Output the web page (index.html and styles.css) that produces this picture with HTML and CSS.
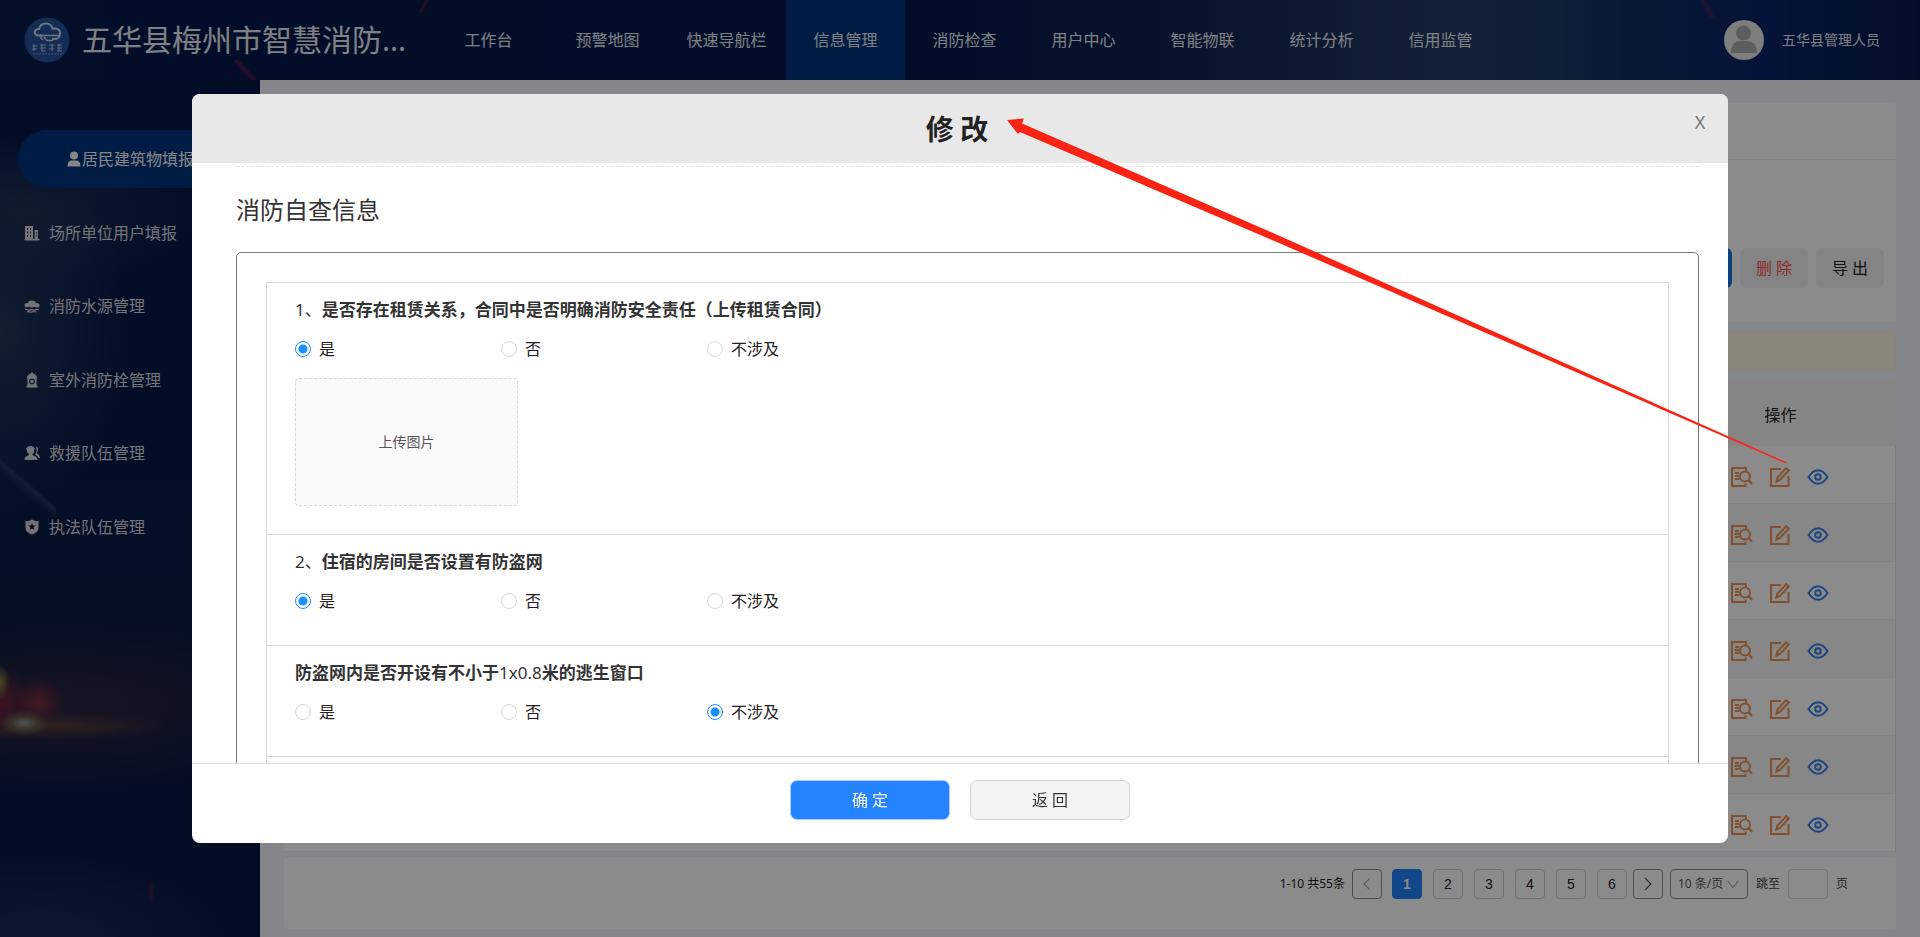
FILE: index.html
```
<!DOCTYPE html>
<html lang="zh-CN">
<head>
<meta charset="utf-8">
<title>五华县梅州市智慧消防</title>
<link rel="stylesheet" href="styles.css">
</head>
<body>
<svg class="sprite" aria-hidden="true">
  <symbol id="i-check" viewBox="0 0 22 20"><path d="M15 4.500V1H1v18h13.500v-2.500M4 6h3M4 9h4M4 12h4.500M4 6h4"/><circle cx="14" cy="9.500" r="5"/><path d="M17.500 13l3.500 4"/></symbol>
  <symbol id="i-edit" viewBox="0 0 20 20"><path d="M11 2H1v17h17.500V9"/><path d="M6.500 14.500l.8-3.800L16 1.200l2.800 2.300L10 13z"/></symbol>
  <symbol id="i-eye" viewBox="0 0 22 16"><path d="M1.500 8C4.500 3.500 7.500 1.200 11 1.200S17.500 3.500 20.500 8c-3 4.500-6 6.800-9.500 6.800S4.500 12.500 1.500 8z"/><circle cx="11" cy="8" r="2.800"/></symbol>
</svg>

<div class="app">
  <header class="topbar">
    <div class="brand">
      <svg class="logo" viewBox="0 0 46 46" aria-hidden="true">
        <circle cx="23" cy="23" r="22.500" fill="#24539b"/>
        <path d="M19 18.500h-5c-5-1-4-6.500 1-6.500 1-4 4-5.500 7-5.500s6 2 6.500 5c5-.5 7.500 1.500 7.500 4.500s-1.500 6-5 6h-3" fill="none" stroke="#c9d6ea" stroke-width="2"/>
        <path d="M16 18.500h19M16 20l3 3M20 20l3 3.500h5l2-2" fill="none" stroke="#c9d6ea" stroke-width="1.500"/>
        <path d="M8 29h5M8 32h5M10 27v7M16 28h6M16 31h6M17 34h5M18 27v7M25 28h5M25 32h5M28 27v7M33 28h5M33 31h5M33 34h5M35 27v7" stroke="#a9bddd" stroke-width="1.200"/>
        <path d="M9 37h29" stroke="#86a3cf" stroke-width="1" stroke-dasharray="2 1"/>
      </svg>
      <h1>五华县梅州市智慧消防...</h1>
    </div>
    <nav class="nav">
      <a href="#">工作台</a>
      <a href="#">预警地图</a>
      <a href="#">快速导航栏</a>
      <a href="#" class="active">信息管理</a>
      <a href="#">消防检查</a>
      <a href="#">用户中心</a>
      <a href="#">智能物联</a>
      <a href="#">统计分析</a>
      <a href="#">信用监管</a>
    </nav>
    <div class="user">
      <svg class="avatar" viewBox="0 0 40 40" aria-hidden="true"><circle cx="20" cy="20" r="20" fill="#e6e6e6"/><circle cx="19.500" cy="13" r="7.500" fill="#a9a9a9"/><path d="M7 30q2-9 9-9h7q8 0 10 9v3H7z" fill="#a9a9a9"/></svg>
      <span>五华县管理人员</span>
    </div>
  </header>

  <div class="body">
    <aside class="sidebar">
      <nav class="menu">
        <a href="#" class="current">
          <svg viewBox="0 0 14 16" aria-hidden="true"><circle cx="7" cy="4.500" r="4"/><path d="M.5 15.500c0-4.500 2-6 4.500-6h4c2.500 0 4.500 1.500 4.500 6z"/></svg>居民建筑物填报</a>
        <a href="#">
          <svg viewBox="0 0 16 16" aria-hidden="true"><path fill-rule="evenodd" d="M1 1h8v13h1.500V5H14v9h1.500v1.500H.5V14H1zM3 3v2h1V3zM6 3v2h1V3zM3 6.500v2h1v-2zM6 6.500v2h1v-2zM3 10v2h1v-2zM6 10v2h1v-2zM11.800 7v1.500h1V7zM11.800 10v1.500h1V10z"/></svg>场所单位用户填报</a>
        <a href="#">
          <svg viewBox="0 0 16 16" aria-hidden="true"><path d="M1 9C-.3 6 1.500 4.500 4 5c1-3.200 6.500-3.200 8 0 3-.5 4.300 1.500 3 4-2 1.200-3 0-4.500 0S8.500 10 7 9.500 5 8.500 3.800 9 2 9.700 1 9z"/><path d="M1 11.500c2-1.200 3 1.500 5 .4s3 .8 5 0 2.500-.8 4-.2M3 14c2-1 3.500.6 5 0s2.500-.4 4.500 0" fill="none" stroke="currentColor" stroke-width="1.200"/></svg>消防水源管理</a>
        <a href="#">
          <svg viewBox="0 0 16 16" aria-hidden="true"><path fill-rule="evenodd" d="M7 .5h2v1c2 .4 3.500 1.600 3.700 3.500H13v1.500h-.5v7h1V15.500h-11v-2h1v-7H3V5h.3C3.500 3.100 5 1.900 7 1.500zM8 6.500a3 3 0 100 6 3 3 0 000-6zm0 1.200a1.800 1.800 0 110 3.600 1.800 1.800 0 010-3.600z"/><circle cx="8" cy="9.500" r=".9"/></svg>室外消防栓管理</a>
        <a href="#">
          <svg viewBox="0 0 16 16" aria-hidden="true"><path d="M2 4c1-4 8-4 9 0l-.8.5c.5 2-.4 3.500-1.700 4.500v1l3 1.500c1.500.8 2 2 2 3.500H.5c0-2 .5-3 2-3.700L5 10V9C3.500 8 2.800 6.500 3 4.500z"/><path d="M11.500 1.500c2.500.3 3 2.500 2.300 4.500-.4 1-1 1.500-1 2.200l1.700 1.300c1 .8 1.500 2 1.500 3.500h-1.500c-.3-1.500-1.500-2.300-3.300-3.200 0-1 1-2.300 1.300-3.800s0-3-1-4.500z"/></svg>救援队伍管理</a>
        <a href="#">
          <svg viewBox="0 0 16 16" aria-hidden="true"><path fill-rule="evenodd" d="M1.500 2L4 2.300 8 .5l4 1.800 2.500-.3v7c0 3-2.500 5-6.500 6.500C4 14 1.500 12 1.500 9zM8 4L7 6.500l-2.700.1 2.100 1.700-.7 2.600L8 9.400l2.300 1.500-.7-2.600 2.100-1.700L9 6.500z"/></svg>执法队伍管理</a>
      </nav>
    </aside>

    <main class="content">
      <section class="panel filters">
        <div class="panel-head"></div>
        <div class="actions">
          <button type="button" class="btn-add" aria-label="新增"></button>
          <button type="button" class="btn-del">删 除</button>
          <button type="button" class="btn-exp">导 出</button>
        </div>
      </section>
      <div class="notice"></div>
      <table class="list">
        <thead><tr><th></th><th class="ops">操作</th></tr></thead>
        <tbody>
          <tr><td></td><td><div class="row-ops"><button type="button" aria-label="检查"><svg class="or"><use href="#i-check"/></svg></button><button type="button" aria-label="修改"><svg class="or sm"><use href="#i-edit"/></svg></button><button type="button" aria-label="查看"><svg class="bl"><use href="#i-eye"/></svg></button></div></td></tr>
          <tr><td></td><td><div class="row-ops"><button type="button" aria-label="检查"><svg class="or"><use href="#i-check"/></svg></button><button type="button" aria-label="修改"><svg class="or sm"><use href="#i-edit"/></svg></button><button type="button" aria-label="查看"><svg class="bl"><use href="#i-eye"/></svg></button></div></td></tr>
          <tr><td></td><td><div class="row-ops"><button type="button" aria-label="检查"><svg class="or"><use href="#i-check"/></svg></button><button type="button" aria-label="修改"><svg class="or sm"><use href="#i-edit"/></svg></button><button type="button" aria-label="查看"><svg class="bl"><use href="#i-eye"/></svg></button></div></td></tr>
          <tr><td></td><td><div class="row-ops"><button type="button" aria-label="检查"><svg class="or"><use href="#i-check"/></svg></button><button type="button" aria-label="修改"><svg class="or sm"><use href="#i-edit"/></svg></button><button type="button" aria-label="查看"><svg class="bl"><use href="#i-eye"/></svg></button></div></td></tr>
          <tr><td></td><td><div class="row-ops"><button type="button" aria-label="检查"><svg class="or"><use href="#i-check"/></svg></button><button type="button" aria-label="修改"><svg class="or sm"><use href="#i-edit"/></svg></button><button type="button" aria-label="查看"><svg class="bl"><use href="#i-eye"/></svg></button></div></td></tr>
          <tr><td></td><td><div class="row-ops"><button type="button" aria-label="检查"><svg class="or"><use href="#i-check"/></svg></button><button type="button" aria-label="修改"><svg class="or sm"><use href="#i-edit"/></svg></button><button type="button" aria-label="查看"><svg class="bl"><use href="#i-eye"/></svg></button></div></td></tr>
          <tr><td></td><td><div class="row-ops"><button type="button" aria-label="检查"><svg class="or"><use href="#i-check"/></svg></button><button type="button" aria-label="修改"><svg class="or sm"><use href="#i-edit"/></svg></button><button type="button" aria-label="查看"><svg class="bl"><use href="#i-eye"/></svg></button></div></td></tr>
        </tbody>
      </table>
      <section class="panel pager">
        <span class="total">1-10 共55条</span>
        <button type="button" class="step off" aria-label="上一页"><svg viewBox="0 0 12 12"><path d="M8.500 1L3.500 6l5 5"/></svg></button>
        <div class="pages">
          <button type="button" class="on">1</button>
          <button type="button">2</button>
          <button type="button">3</button>
          <button type="button">4</button>
          <button type="button">5</button>
          <button type="button">6</button>
        </div>
        <button type="button" class="step" aria-label="下一页"><svg viewBox="0 0 12 12"><path d="M3.500 1l5 5-5 5"/></svg></button>
        <span class="size"><select aria-label="每页条数"><option>10 条/页</option></select><svg viewBox="0 0 12 12" aria-hidden="true"><path d="M1.500 3.500L6 9l4.500-5.500"/></svg></span>
        <label class="jump">跳至<input type="text">页</label>
      </section>
    </main>
  </div>
</div>

<div class="mask">
  <section class="modal" role="dialog" aria-labelledby="dlg-title">
    <header class="modal-head">
      <h2 id="dlg-title">修 改</h2>
      <button type="button" class="close">X</button>
    </header>
    <div class="modal-body">
      <h3>消防自查信息</h3>
      <div class="sheet">
        <form class="questions">
          <fieldset class="q">
            <legend><span>1、</span>是否存在租赁关系，合同中是否明确消防安全责任（上传租赁合同）</legend>
            <div class="opts">
              <label><input type="radio" name="q1" checked>是</label>
              <label><input type="radio" name="q1">否</label>
              <label><input type="radio" name="q1">不涉及</label>
            </div>
            <button type="button" class="upload">上传图片</button>
          </fieldset>
          <fieldset class="q">
            <legend><span>2、</span>住宿的房间是否设置有防盗网</legend>
            <div class="opts">
              <label><input type="radio" name="q2" checked>是</label>
              <label><input type="radio" name="q2">否</label>
              <label><input type="radio" name="q2">不涉及</label>
            </div>
          </fieldset>
          <fieldset class="q">
            <legend>防盗网内是否开设有不小于<span>1x0.8</span>米的逃生窗口</legend>
            <div class="opts">
              <label><input type="radio" name="q3">是</label>
              <label><input type="radio" name="q3">否</label>
              <label><input type="radio" name="q3" checked>不涉及</label>
            </div>
          </fieldset>
          <div class="q"></div>
        </form>
      </div>
    </div>
    <footer class="modal-foot">
      <button type="button" class="ok">确 定</button>
      <button type="button" class="back">返 回</button>
    </footer>
  </section>
</div>

<svg class="arrow" viewBox="0 0 1920 937" preserveAspectRatio="none" aria-hidden="true">
  <path d="M1007 120L1024 118.500 1022 123.500 1281 236.500 1787 462.500 1786 463.500 1279 243 1020 132 1018 134z"/>
</svg>
</body>
</html>
```
FILE: styles.css
```
* { box-sizing: border-box; }
body {
  margin: 0;
  overflow: hidden;
  font-family: "Noto Sans", "Noto Sans CJK SC", sans-serif;
  font-size: 16px;
  line-height: 24px;
  color: #222;
}
a { color: inherit; text-decoration: none; }
button, input, select { font: inherit; color: inherit; margin: 0; padding: 0; }
button { cursor: pointer; }
h1, h2, h3 { margin: 0; font-weight: 400; }
.sprite { display: none; }

/* page shell */
.app { display: flex; flex-direction: column; min-height: 100vh; }
.topbar {
  display: flex;
  align-items: center;
  height: 80px;
  color: #e8eaee;
  background:
    linear-gradient(118deg, transparent 38%, rgba(150, 25, 75, .5) 50%, transparent 62%) 417px -4px / 16px 16px no-repeat,
    linear-gradient(48deg, transparent 36%, rgba(150, 20, 70, .55) 50%, transparent 64%) 234px 60px / 22px 20px no-repeat,
    linear-gradient(62deg, transparent 36%, rgba(130, 20, 90, .5) 50%, transparent 64%) 1698px 0 / 20px 18px no-repeat,
    linear-gradient(90deg, #061a4c 0, #04184a 22%, #05194c 50%, #0c2250 60%, #182f5a 68%, #213a66 75%, #1d3765 81%, #0d2962 86%, #092466 92%, #051a4c 100%);
}
.brand { display: flex; align-items: center; gap: 12px; width: 429px; padding-left: 24px; }
.brand h1 { font-size: 30px; line-height: 40px; }
.logo { flex: none; width: 46px; height: 46px; }
.nav { display: flex; align-self: stretch; }
.nav a { width: 119px; line-height: 80px; text-align: center; }
.nav .active { background: #00337c; }
.user { display: flex; align-items: center; gap: 18px; margin-left: auto; padding-right: 40px; font-size: 14px; }
.avatar { width: 40px; height: 40px; }

.body { display: flex; flex: 1; }
.sidebar {
  flex: none;
  width: 260px;
  padding-top: 50px;
  color: #fff;
  background:
    radial-gradient(ellipse 24px 13px at 24px 643px, #8f9f9c, rgba(130, 130, 90, .5) 50%, transparent),
    radial-gradient(ellipse 10px 18px at 0 602px, #85863a, transparent),
    radial-gradient(ellipse 26px 24px at 38px 622px, rgba(130, 50, 62, .9), rgba(110, 40, 60, .5) 60%, transparent),
    radial-gradient(ellipse 28px 36px at 4px 624px, rgba(120, 35, 60, .9), transparent),
    radial-gradient(ellipse 120px 14px at 50px 646px, rgba(120, 75, 50, .6), transparent),
    radial-gradient(ellipse 260px 90px at 60px 630px, rgba(70, 50, 62, .5), transparent),
    radial-gradient(ellipse 4px 14px at 151px 812px, rgba(120, 30, 50, .6), transparent),
    linear-gradient(41deg, transparent 44%, rgba(50, 72, 110, .6) 49%, transparent 51%) -50px 320px / 106px 124px no-repeat,
    radial-gradient(ellipse 130px 190px at 0 250px, rgba(48, 66, 95, .7), transparent),
    radial-gradient(ellipse 180px 80px at 30px 130px, rgba(46, 58, 86, .6), transparent),
    radial-gradient(ellipse 200px 100px at 40px 870px, rgba(42, 64, 104, .6), transparent),
    linear-gradient(180deg, #041748 0, #071a46 45%, #0b1a42 60%, #0f1b40 72%, #081842 80%, #061844 100%);
}
.menu { display: flex; flex-direction: column; justify-content: space-between; height: 426px; }
.menu a { display: flex; align-items: center; gap: 9px; height: 58px; padding-left: 24px; color: #d2d5db; }
.menu svg { flex: none; width: 16px; height: 16px; fill: currentColor; }
.menu .current {
  gap: 0;
  margin-left: 18px;
  padding-left: 48px;
  color: #f4f5f7;
  border-radius: 29px 0 0 29px;
  background: #00337c;
}

.content { flex: 1; display: flex; flex-direction: column; padding: 23px 24px 8px; background: #f3f4fb; }
.panel { background: #fdfdfd; border-radius: 4px; }
.filters { height: 219px; }
.panel-head { height: 57px; border-bottom: 1px solid #e6e6e6; }
.actions { display: flex; justify-content: flex-end; gap: 8px; padding: 88px 12px 0 0; }
.actions button { width: 68px; height: 40px; border: 0; border-radius: 6px; background: #f1f1f1; }
.actions .btn-add { background: #1677e8; }
.actions .btn-del { color: #ff5052; }
.notice { height: 38px; margin: 10px 0; border: 1px solid #fbefd2; background: #fcf4e2; }

.list { width: 100%; border-collapse: separate; border-spacing: 0; table-layout: fixed; background: #fdfdfd; }
.list th { height: 66px; padding: 0; font-weight: 400; background: #f3f3f3; }
.list .ops { width: 231px; padding-top: 4px; }
.list td { height: 58px; padding: 4px 0 0; border-bottom: 1px solid #ededed; }
.list tr td:last-child { border-right: 1px solid #e0e0e0; }
.list tbody tr:nth-child(even) { background: #f6f6f6; }
.row-ops { display: flex; align-items: center; justify-content: center; gap: 17px; }
.row-ops button { display: flex; border: 0; background: none; }
.row-ops svg { width: 22px; height: 20px; fill: none; stroke-width: 2; }
.row-ops .sm { width: 20px; }
.row-ops .or { stroke: #ee9256; }
.row-ops .bl { width: 22px; height: 16px; stroke: #3580e6; }

.pager {
  display: flex;
  align-items: center;
  justify-content: flex-end;
  gap: 7px;
  flex: 1;
  margin-top: 5px;
  padding: 0 48px 18px 0;
  font-size: 12px;
}
.pages { display: flex; gap: 11px; margin: 0 -1px 0 3px; }
.pages button, .step {
  width: 30px;
  height: 30px;
  border: 1px solid #cacaca;
  border-radius: 4px;
  background: none;
  font: 14px "Liberation Sans", Arial, sans-serif;
}
.pages .on { color: #fff; border-color: #1f80f8; background: #1f80f8; font-weight: 700; }
.pager .step { display: flex; align-items: center; justify-content: center; border-color: #888; }
.pager svg { width: 14px; height: 14px; fill: none; stroke: #444; stroke-width: 1; }
.pager .off svg, .pager .size svg { stroke: #aaa; }
.size { display: flex; align-items: center; width: 78px; height: 30px; padding: 0 7px; border: 1px solid #888; border-radius: 4px; }
.size select { width: 52px; appearance: none; border: 0; background: none; color: #555; }
.size svg { flex: none; margin-left: -4px; }
.jump { display: flex; align-items: center; gap: 8px; margin-left: 1px; color: #444; }
.jump input { width: 40px; height: 30px; border: 1px solid #d8d8d8; border-radius: 4px; background: none; }

/* dialog */
.mask {
  position: fixed;
  inset: 0;
  display: flex;
  align-items: center;
  justify-content: center;
  background: rgba(0, 0, 0, .45);
}
.modal {
  display: flex;
  flex-direction: column;
  width: 80%;
  height: 80vh;
  overflow: hidden;
  border-radius: 8px;
  background: #fff;
}
.modal-head { position: relative; flex: none; height: 69px; padding-right: 6px; background: #e8e8e8; text-align: center; }
.modal-head h2 { font-family: "Noto Sans CJK SC", sans-serif; font-size: 28px; line-height: 68px; font-weight: 700; }
.close { position: absolute; top: 16px; right: 20px; width: 16px; border: 0; background: none; font-size: 18px; color: #777; }
.modal-body { flex: 1; min-height: 0; overflow: hidden; padding: 3px 29px 0 44px; }
.modal-body h3 { padding: 26px 0 26px; border-top: 1px dashed #e4e4e4; font-size: 24px; line-height: 33px; color: #333; }
.sheet { padding: 29px 29px 40px; border: 1px solid #777; border-radius: 5px; }
.questions { border: 1px solid #d9d9d9; border-top: 0; }
.q { min-height: 111px; margin: 0; padding: 15px 28px 32px; border: 0; border-top: 1px solid #d9d9d9; }
.q:has(.upload) { padding-bottom: 28px; }
.q legend { float: left; width: 100%; padding: 0; font-size: 17px; font-weight: 700; color: #333; }
.q legend span { font-weight: 400; }
.opts { clear: both; display: flex; padding-top: 15px; }
.opts label { display: flex; align-items: center; gap: 8px; width: 206px; }
.opts input {
  appearance: none;
  width: 16px;
  height: 16px;
  border: 1px solid #d9d9d9;
  border-radius: 50%;
  background: #fff;
}
.opts input:checked { border-color: #1890ff; background: radial-gradient(circle, #1890ff 4px, #fff 5px); }
.upload {
  display: block;
  width: 223px;
  height: 128px;
  margin-top: 17px;
  border: 1px dashed #d9d9d9;
  border-radius: 4px;
  background: #fafafa;
  font-size: 14px;
  color: #555;
}
.modal-foot { flex: none; display: flex; justify-content: center; gap: 20px; height: 80px; padding-top: 16px; border-top: 1px solid #e0e0e0; }
.modal-foot button { width: 160px; height: 40px; border-radius: 7px; }
.ok { color: #fff; border: 1px solid #a9d0ff; background: #2483ff; }
.back { color: #333; border: 1px solid #d4d4d4; background: #f3f3f3; }

.arrow { position: fixed; inset: 0; width: 100%; height: 100%; pointer-events: none; fill: #fb2313; }
```
